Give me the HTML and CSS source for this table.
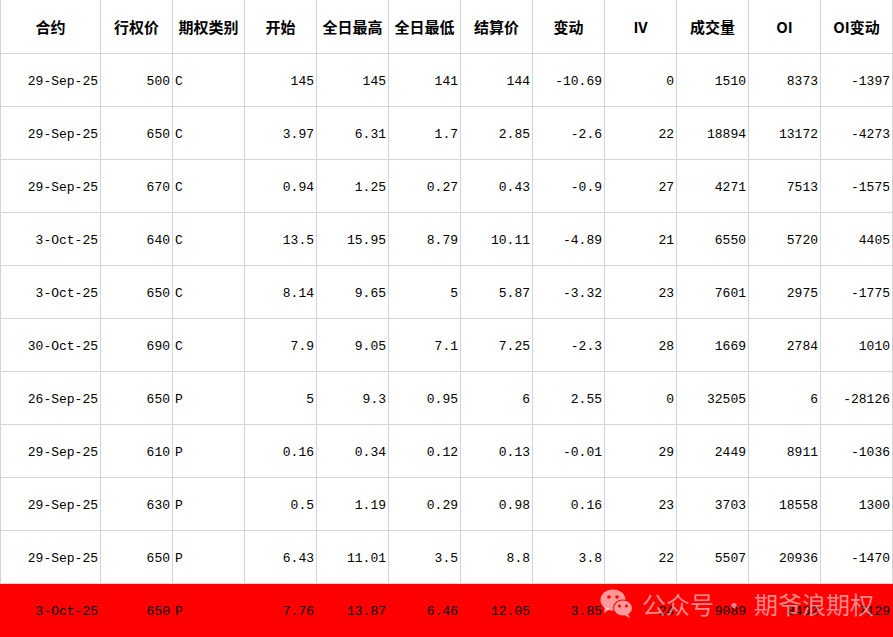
FILE: index.html
```html
<!DOCTYPE html>
<html lang="zh">
<head>
<meta charset="utf-8">
<link rel="stylesheet" href="styles.css">
</head>
<body>
<div class="sheet">
  <div class="row head">
    <div class="c">合约</div><div class="c">行权价</div><div class="c">期权类别</div><div class="c">开始</div><div class="c">全日最高</div><div class="c">全日最低</div><div class="c">结算价</div><div class="c">变动</div><div class="c">IV</div><div class="c">成交量</div><div class="c">OI</div><div class="c">OI变动</div>
  </div>
  <div class="row"><div class="c">29-Sep-25</div><div class="c">500</div><div class="c t">C</div><div class="c">145</div><div class="c">145</div><div class="c">141</div><div class="c">144</div><div class="c">-10.69</div><div class="c">0</div><div class="c">1510</div><div class="c">8373</div><div class="c">-1397</div></div>
  <div class="row"><div class="c">29-Sep-25</div><div class="c">650</div><div class="c t">C</div><div class="c">3.97</div><div class="c">6.31</div><div class="c">1.7</div><div class="c">2.85</div><div class="c">-2.6</div><div class="c">22</div><div class="c">18894</div><div class="c">13172</div><div class="c">-4273</div></div>
  <div class="row"><div class="c">29-Sep-25</div><div class="c">670</div><div class="c t">C</div><div class="c">0.94</div><div class="c">1.25</div><div class="c">0.27</div><div class="c">0.43</div><div class="c">-0.9</div><div class="c">27</div><div class="c">4271</div><div class="c">7513</div><div class="c">-1575</div></div>
  <div class="row"><div class="c">3-Oct-25</div><div class="c">640</div><div class="c t">C</div><div class="c">13.5</div><div class="c">15.95</div><div class="c">8.79</div><div class="c">10.11</div><div class="c">-4.89</div><div class="c">21</div><div class="c">6550</div><div class="c">5720</div><div class="c">4405</div></div>
  <div class="row"><div class="c">3-Oct-25</div><div class="c">650</div><div class="c t">C</div><div class="c">8.14</div><div class="c">9.65</div><div class="c">5</div><div class="c">5.87</div><div class="c">-3.32</div><div class="c">23</div><div class="c">7601</div><div class="c">2975</div><div class="c">-1775</div></div>
  <div class="row"><div class="c">30-Oct-25</div><div class="c">690</div><div class="c t">C</div><div class="c">7.9</div><div class="c">9.05</div><div class="c">7.1</div><div class="c">7.25</div><div class="c">-2.3</div><div class="c">28</div><div class="c">1669</div><div class="c">2784</div><div class="c">1010</div></div>
  <div class="row"><div class="c">26-Sep-25</div><div class="c">650</div><div class="c t">P</div><div class="c">5</div><div class="c">9.3</div><div class="c">0.95</div><div class="c">6</div><div class="c">2.55</div><div class="c">0</div><div class="c">32505</div><div class="c">6</div><div class="c">-28126</div></div>
  <div class="row"><div class="c">29-Sep-25</div><div class="c">610</div><div class="c t">P</div><div class="c">0.16</div><div class="c">0.34</div><div class="c">0.12</div><div class="c">0.13</div><div class="c">-0.01</div><div class="c">29</div><div class="c">2449</div><div class="c">8911</div><div class="c">-1036</div></div>
  <div class="row"><div class="c">29-Sep-25</div><div class="c">630</div><div class="c t">P</div><div class="c">0.5</div><div class="c">1.19</div><div class="c">0.29</div><div class="c">0.98</div><div class="c">0.16</div><div class="c">23</div><div class="c">3703</div><div class="c">18558</div><div class="c">1300</div></div>
  <div class="row"><div class="c">29-Sep-25</div><div class="c">650</div><div class="c t">P</div><div class="c">6.43</div><div class="c">11.01</div><div class="c">3.5</div><div class="c">8.8</div><div class="c">3.8</div><div class="c">22</div><div class="c">5507</div><div class="c">20936</div><div class="c">-1470</div></div>
  <div class="row hot"><div class="c">3-Oct-25</div><div class="c">650</div><div class="c t">P</div><div class="c">7.76</div><div class="c">13.87</div><div class="c">6.46</div><div class="c">12.05</div><div class="c">3.85</div><div class="c">24</div><div class="c">9089</div><div class="c">8432</div><div class="c">7129</div></div>
</div>
<div class="mark">
  <svg class="wx" width="34" height="31" viewBox="0 0 34 31">
    <ellipse cx="13" cy="12" rx="12.5" ry="10.5" fill="rgba(255,255,255,0.6)"/>
    <path d="M5 19 L4 25 L10 21 Z" fill="rgba(255,255,255,0.6)"/>
    <circle cx="9" cy="9" r="1.8" fill="#ff0000"/>
    <circle cx="17" cy="9" r="1.8" fill="#ff0000"/>
    <ellipse cx="23" cy="20" rx="10" ry="8.5" fill="#ff0000"/>
    <ellipse cx="23" cy="20" rx="9" ry="7.6" fill="rgba(255,255,255,0.6)"/>
    <path d="M28 26 L30 30 L25 27.5 Z" fill="rgba(255,255,255,0.6)"/>
    <circle cx="19.5" cy="18" r="1.5" fill="#ff0000"/>
    <circle cx="26.5" cy="18" r="1.5" fill="#ff0000"/>
  </svg>
  <span class="mt">公众号<span class="dot">·</span>期爷浪期权</span>
</div>
</body>
</html>
```

FILE: styles.css
```css
html, body {
  margin: 0;
  padding: 0;
  background: #ffffff;
}
body {
  width: 893px;
  height: 637px;
  overflow: hidden;
  position: relative;
  font-family: "Liberation Mono", "Noto Sans CJK SC", monospace;
  font-size: 13px;
  color: #000;
}
.sheet {
  display: flex;
  flex-direction: column;
}
.row {
  display: grid;
  grid-template-columns: 101px repeat(11, 72px);
  height: 53px;
}
.row.head {
  height: 54px;
}
.c {
  border-right: 1px solid #d4d4d4;
  border-bottom: 1px solid #d4d4d4;
  display: flex;
  align-items: center;
  justify-content: flex-end;
  padding-right: 2px;
  padding-top: 2px;
  box-sizing: border-box;
  white-space: nowrap;
}
.c:first-child {
  border-left: 1px solid #d4d4d4;
}
.c.t {
  justify-content: flex-start;
  padding-left: 2px;
  padding-right: 0;
}
.head .c {
  justify-content: center;
  padding: 0;
  font-family: "Noto Sans CJK SC", "Liberation Mono", sans-serif;
  font-weight: 700;
  font-size: 15px;
}
.hot {
  background: #ff0000;
}
.hot .c {
  border-color: transparent;
}
.mark {
  position: absolute;
  left: 600px;
  top: 586px;
  display: flex;
  align-items: center;
  gap: 8px;
}
.mt {
  font-family: "Noto Sans CJK SC", sans-serif;
  font-size: 24px;
  color: rgba(255, 255, 255, 0.55);
  white-space: nowrap;
}
.dot {
  margin: 0 8px;
}
```
